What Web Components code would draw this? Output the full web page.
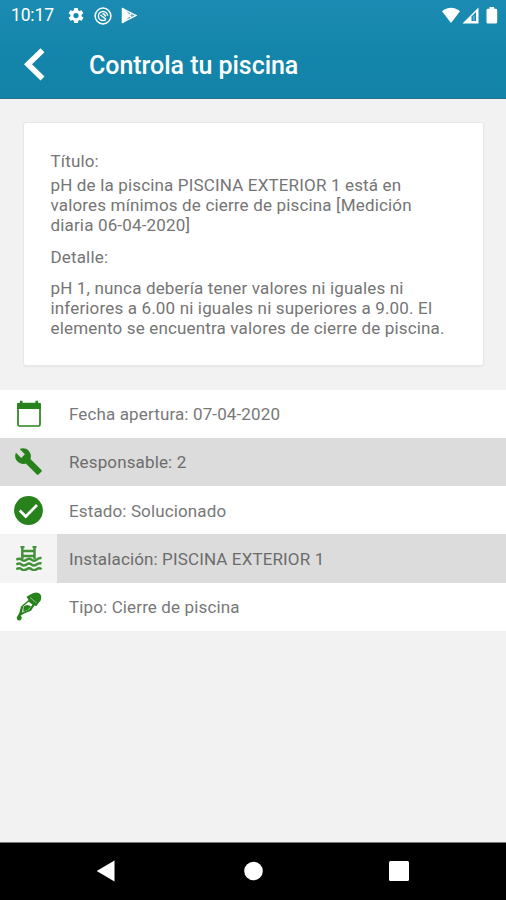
<!DOCTYPE html>
<html lang="es">
<head>
<meta charset="utf-8">
<title>Controla tu piscina</title>
<style>
html,body{margin:0;height:100%}
body{background:#f2f2f2;font-family:Roboto,"Liberation Sans",sans-serif;overflow:hidden}
</style>
</head>
<body>
<pool-screen></pool-screen>
<script>
const define=(name,markup)=>{
  const t=document.createElement('template');
  t.innerHTML=markup;
  customElements.define(name,class extends HTMLElement{
    constructor(){super();this.attachShadow({mode:'open'}).append(t.content.cloneNode(true));}
  });
};

define('status-bar',`<style>
:host{display:flex;height:31px;box-sizing:border-box;padding:0 6px 0 11px;align-items:center;color:#fff;font-size:17.5px;line-height:31px}
svg{display:block;fill:#fff}
span{width:45px;margin-right:11px;letter-spacing:-.15px;white-space:nowrap}
.gap{flex:1}
</style>
<span>10:17</span>
<svg width="18" height="19" viewBox="0 0 24 24"><path d="M19.4 13a7.600 7.600 0 0 0 0-2l2.100-1.600a.5.5 0 0 0 .1-.7l-2-3.400a.5.5 0 0 0-.6-.2l-2.500 1a7 7 0 0 0-1.700-1l-.4-2.700A.5.5 0 0 0 14 2h-4a.5.5 0 0 0-.5.4l-.4 2.700a8 8 0 0 0-1.700 1l-2.500-1a.5.5 0 0 0-.6.200l-2 3.400a.5.5 0 0 0 .1.700L4.600 11a8 8 0 0 0 0 2l-2.100 1.600a.5.5 0 0 0-.1.700l2 3.400c.1.200.4.300.6.200l2.500-1a7 7 0 0 0 1.700 1l.4 2.700c0 .2.200.4.500.4h4c.2 0 .5-.2.500-.4l.4-2.700a8 8 0 0 0 1.700-1l2.500 1c.2.100.5 0 .6-.2l2-3.400a.5.5 0 0 0-.1-.7zM12 15.500a3.500 3.500 0 1 1 0-7 3.500 3.500 0 0 1 0 7z"/></svg>
<svg width="18" height="18" viewBox="0 0 18 18" style="margin-left:9px"><circle cx="9" cy="9" r="7.900" fill="none" stroke="#fff" stroke-width="1.500"/><circle cx="9" cy="9" r="4.600" fill="none" stroke="#fff" stroke-width="1.500" stroke-dasharray="24 4.900" stroke-dashoffset="-4"/><path d="M6.500 8 12 12.300M8.500 6.800q2.500 0 3 2.800" fill="none" stroke="#fff" stroke-width="1.400"/></svg>
<svg width="17" height="17" viewBox="0 0 17 17" style="margin-left:9px"><path d="M1.400 1.500 15 8.500 1.400 15.500z" fill="#fff" fill-opacity=".3" stroke="#fff" stroke-width="1.300"/><path d="M1 1v15L7.800 8.500z"/><path d="M2 1.500 10.500 10.700M2 15.500 10.500 6.300" stroke="#fff" stroke-width="1.300"/></svg>
<i class="gap"></i>
<svg width="20" height="17" viewBox="0 0 20 17"><path d="M1 4.300C6-.4 14-.4 19 4.300L10 16z"/></svg>
<svg width="17" height="17" viewBox="0 0 17 17" style="margin-left:1px"><path d="M.5 16.500 16.500 .5v16z"/><path d="M9.500 14V9.500L14 5v9z" fill="#1587ac"/><path d="M10.800 13.500v-4l2-2v6z" fill="#fff" fill-opacity=".3"/></svg>
<svg width="12" height="17" viewBox="0 0 12 17" style="margin:0 2px 0 7px"><path d="M3.500 0h4.600v1.800h1.700q1.400 0 1.400 1.400v11.900q0 1.500-1.400 1.500h-8Q.5 16.600.5 15.100V3.200q0-1.400 1.300-1.400h1.700z"/></svg>`);

define('app-header',`<style>
:host{display:flex;height:67px;align-items:center;color:#fff}
svg{display:block;margin-left:24px;width:22px;height:34px;flex:none}
h1{margin:0 0 0 43px;padding-top:2px;font-size:25px;font-weight:500;line-height:32px;letter-spacing:-.04px;white-space:nowrap}
</style>
<svg viewBox="0 0 22 34"><path d="M18.500 2.300 4 16.300 18.500 30.500" fill="none" stroke="#fff" stroke-width="5.600"/></svg>
<h1><slot></slot></h1>`);

define('detail-card',`<style>
:host{display:block;box-sizing:border-box;width:459px;height:242px;margin:0 23px 24.500px 24px;padding:27px 26.500px;background:#fff;border-radius:2px;box-shadow:0 0 0 1px #e8e8e8,0 1px 2px #ccc;color:#757575;font-size:17px;line-height:20.200px;letter-spacing:.16px;white-space:nowrap}
.label{line-height:22px}
.title{padding:3px 0 10px}
.detail{padding-top:10px}
</style>
<div class="label">Título:</div>
<div class="title"><slot name="title"></slot></div>
<div class="label">Detalle:</div>
<div class="detail"><slot name="detail"></slot></div>`);

define('info-row',`<style>
:host{display:flex;height:48.250px;background:#fff;color:#787878;font-size:17px;letter-spacing:.13px;align-items:stretch}
:host([shaded]){background:#dcdcdc;color:#6c6c6c}
.icon{width:57px;display:flex;align-items:center;justify-content:center;flex:none}
:host([light-icon]) .icon{background:#f4f4f4}
.text{padding:1px 0 0 12px;align-self:center;white-space:nowrap}
::slotted(svg){display:block}
</style><div class="icon"><slot name="icon"></slot></div><div class="text"><slot></slot></div>`);

define('nav-bar',`<style>
:host{display:grid;grid-template-columns:repeat(3,146px);justify-content:center;height:58px;padding-bottom:1px;background:#000;border-top:1px solid #777;box-sizing:border-box;align-items:center;justify-items:center}
svg{display:block}
</style>
<svg width="22" height="22" viewBox="0 0 22 22"><path d="M.7 11 18.500 .5v21z" fill="#fff"/></svg>
<svg width="22" height="22" viewBox="0 0 22 22"><circle cx="11.500" cy="11" r="9.300" fill="#fff"/></svg>
<svg width="22" height="22" viewBox="0 0 22 22"><rect x="1" y="1" width="20" height="20" rx="1.500" fill="#fff"/></svg>`);

define('pool-screen',`<style>
:host{display:flex;flex-direction:column;width:506px;height:900px;background:#f2f2f2}
.top{height:99px;margin-bottom:24px;background:linear-gradient(#1b8bb3,#1485aa 55%,#1384a8);box-shadow:inset 0 -1px #25718b}
.fill{flex:1}
svg{fill:#28821c}
</style>
<div class="top"><status-bar></status-bar><app-header>Controla tu piscina</app-header></div>
<detail-card>
<span slot="title">pH de la piscina PISCINA EXTERIOR 1 está en<br>valores mínimos de cierre de piscina [Medición<br>diaria 06-04-2020]</span>
<span slot="detail">pH 1, nunca debería tener valores ni iguales ni<br>inferiores a 6.00 ni iguales ni superiores a 9.00. El<br>elemento se encuentra valores de cierre de piscina.</span>
</detail-card>
<info-row><svg slot="icon" width="26" height="28" viewBox="0 0 26 28"><path d="M3.500 3.500h19q1.500 0 1.500 1.500v19.500q0 1.500-1.500 1.500h-19Q2 26 2 24.500V5q0-1.500 1.500-1.500z" fill="none" stroke="#28821c" stroke-width="1.700"/><path d="M1.200 3h23.600v6H1.200zM4 .8h2.500V4H4zM19.500.8H22V4h-2.500z"/></svg>Fecha apertura: 07-04-2020</info-row>
<info-row shaded><svg slot="icon" width="29" height="29" viewBox="0 0 24 24"><path d="M22.700 19l-9.100-9.100c.9-2.300.4-5-1.500-6.900-2-2-5-2.400-7.400-1.300L9 6 6 9 1.600 4.700C.4 7.100.9 10.100 2.900 12.100c1.900 1.900 4.600 2.400 6.900 1.500l9.100 9.100c.4.400 1 .4 1.400 0l2.300-2.300c.5-.4.500-1.100.1-1.400z"/></svg>Responsable: 2</info-row>
<info-row><svg slot="icon" width="29" height="29" viewBox="0 0 29 29"><circle cx="14.500" cy="14.500" r="14.400"/><path d="M5.800 14.500 11.700 20.500 23 9" fill="none" stroke="#fff" stroke-width="2.700"/></svg>Estado: Solucionado</info-row>
<info-row shaded light-icon><svg slot="icon" width="26" height="26" viewBox="0 0 26 26"><g fill="none" stroke="#43923a" stroke-width="2.500"><path d="M6.300 14V2M18.500 14V2M6.300 6h12.200M6.300 11h12.200"/><path d="M4.500 2h4M16.500 2h4" stroke-width="1.800"/><path d="M.3 14.700q3-2 5.200 0t5 0 5 0 5 0 5-1.500M.3 19.500q3-2 5.200 0t5 0 5 0 5 0 5-1M.3 24.200q3-2 5.200 0t5 0 5 0 5 0 5 0"/></g></svg>Instalación: PISCINA EXTERIOR 1</info-row>
<info-row><svg slot="icon" width="26" height="29" viewBox="0 0 26 29"><path d="M10.500 4.800 14 2.800Q16.500.8 20 .6 25.500 1 25.300 6q-.3 3.500-2.800 5L20.500 14l-2-.5L15 18.800 7 22 5.200 23.500 3 22 5 14.500 12.500 8z"/><path d="M12.500 9.800 7.200 14.500 6 20.500 13 17.500 16.500 12.500z" fill="#fff"/><path d="M7.500 14.500q4-3 7.500 0l-2.500 3-5.200 2.200z"/><path d="M14 5.500 20.500 11" stroke="#fff" stroke-width=".5"/><path d="M3.500 20.500 .9 25.300Q.5 28.600 3.200 28.600 6 28.300 5.600 25.300z"/></svg>Tipo: Cierre de piscina</info-row>
<div class="fill"></div>
<nav-bar></nav-bar>`);
</script>
</body>
</html>
